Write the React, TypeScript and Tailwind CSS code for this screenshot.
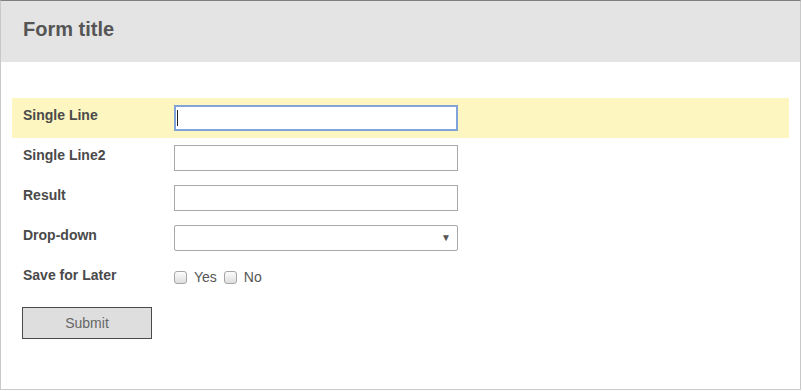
import React from "react";

const font = { fontFamily: '"Liberation Sans", Arial, sans-serif' };

function Row({ label, highlight, children }: { label: string; highlight?: boolean; children: React.ReactNode }) {
  return (
    <div className={`flex h-[40px] w-[777px] ${highlight ? "bg-[#fdf6c0]" : ""}`}>
      <div className="w-[162px] pl-[11px] pt-[9px] text-[14px] leading-[17px] font-bold text-[#4a4a4a]">{label}</div>
      <div className="pt-[7px]">{children}</div>
    </div>
  );
}

function Box() {
  return (
    <div className="h-[13px] w-[13px] rounded-[3px] border border-[#a6a6a6] bg-gradient-to-b from-[#fcfcfc] to-[#dedede]" />
  );
}

export default function App() {
  return (
    <div style={font} className="h-[391px] w-[802px] bg-white">
      <div className="h-[390px] w-[801px] border border-[#c9c9c9] border-t-[#7f7f7f] bg-white">
        <div className="h-[61px] bg-[#e4e4e4] pl-[22px] pt-[16px]">
          <h1 className="text-[20px] leading-[24px] font-bold text-[#555555]">Form title</h1>
        </div>
        <div className="pl-[11px] pt-[36px]">
          <Row label="Single Line" highlight>
            <div className="relative h-[26px] w-[284px] border-2 border-[#7fa3da] bg-white">
              <div className="absolute left-[1px] top-[3px] h-[16px] w-[1px] bg-[#222]" />
            </div>
          </Row>
          <Row label="Single Line2">
            <div className="h-[26px] w-[284px] border border-[#a9a9a9] bg-white" />
          </Row>
          <Row label="Result">
            <div className="h-[26px] w-[284px] border border-[#a9a9a9] bg-white" />
          </Row>
          <Row label="Drop-down">
            <div className="flex h-[26px] w-[284px] items-center justify-end rounded-[2px] border border-[#a9a9a9] bg-white pr-[6px]">
              <span className="text-[10px] leading-none text-[#555]">▼</span>
            </div>
          </Row>
          <div className="flex h-[40px] w-[777px]">
            <div className="w-[162px] pl-[11px] pt-[9px] text-[14px] leading-[17px] font-bold text-[#4a4a4a]">Save for Later</div>
            <div className="flex items-center pb-[2px] text-[14px] text-[#555]">
              <Box />
              <span className="ml-[7px]">Yes</span>
              <div className="ml-[7px]"><Box /></div>
              <span className="ml-[7px]">No</span>
            </div>
          </div>
          <div className="pl-[10px] pt-[9px]">
            <button className="h-[32px] w-[130px] border border-[#4a4a4a] bg-[#dedede] text-[14px] text-[#666666]">Submit</button>
          </div>
        </div>
      </div>
    </div>
  );
}
